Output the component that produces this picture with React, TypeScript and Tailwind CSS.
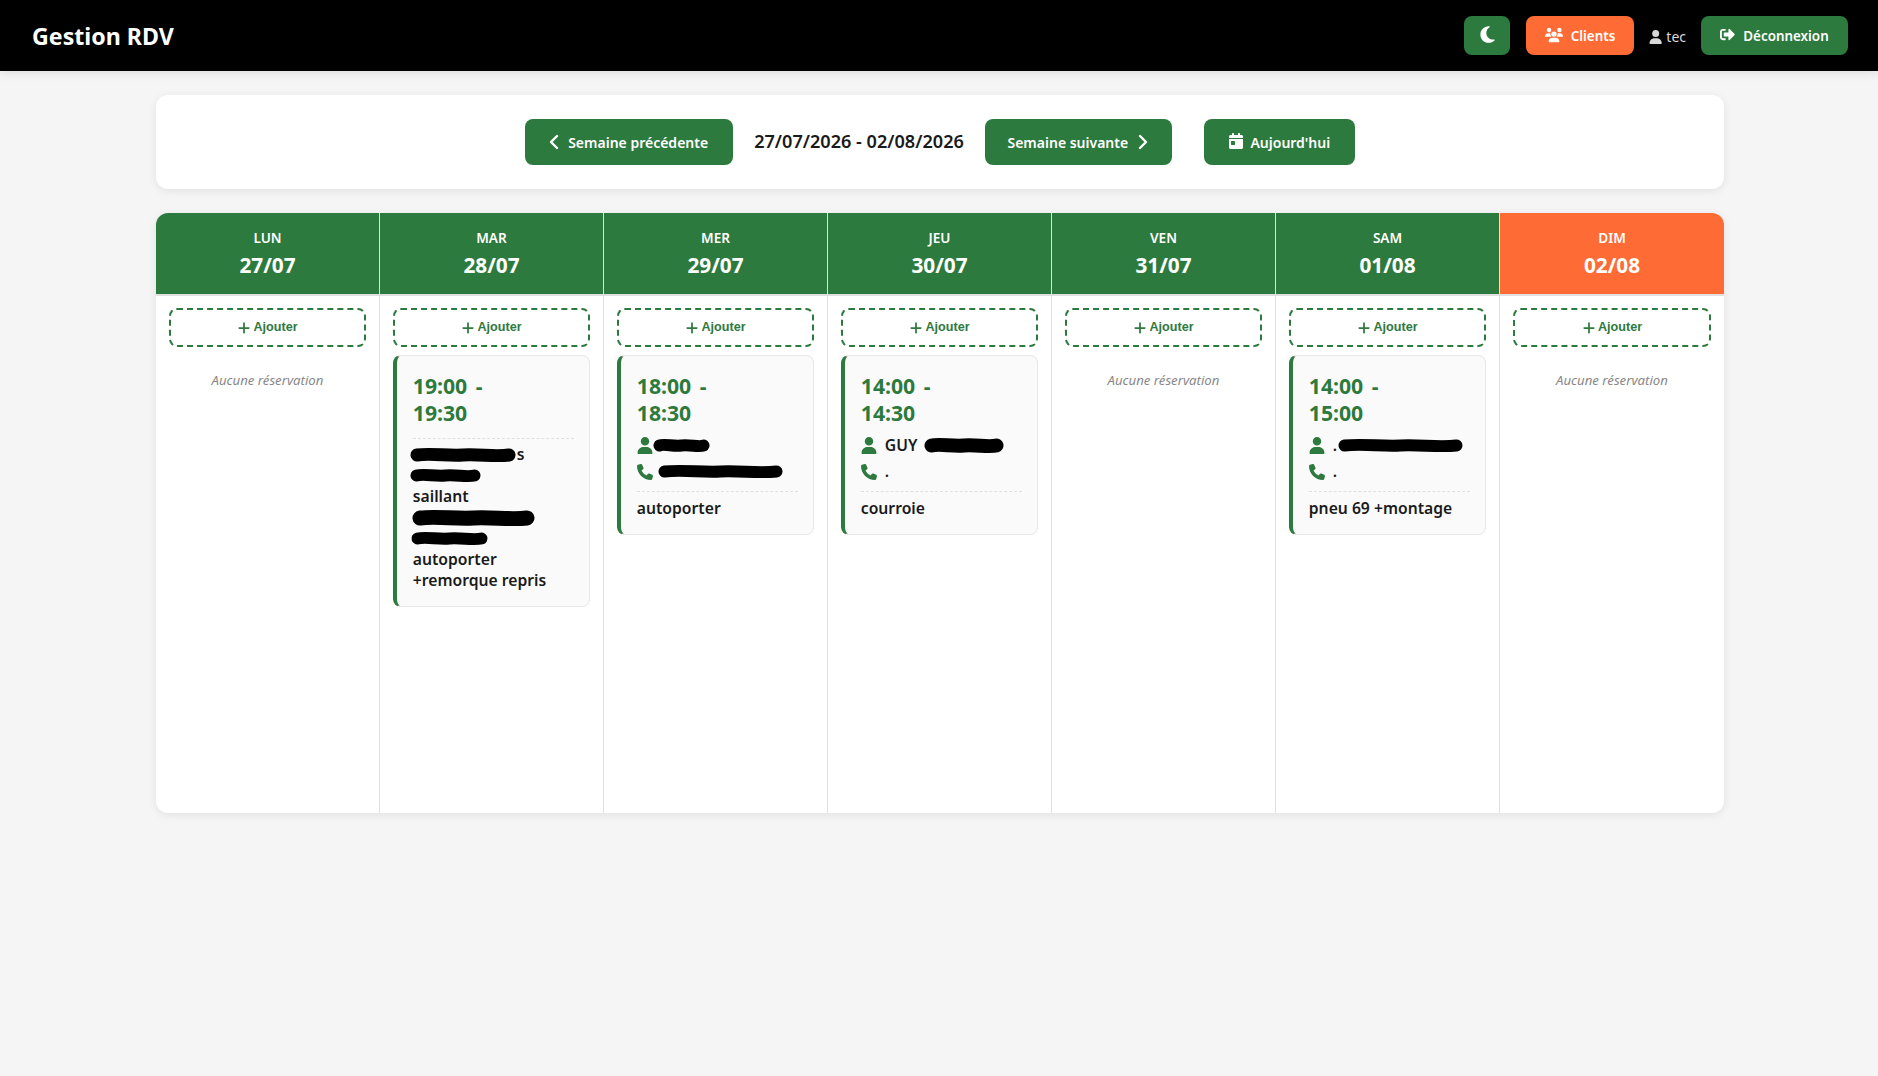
import { FaSignOutAlt } from 'react-icons/fa';
import {
  FaCalendarDay,
  FaMoon,
  FaPhone,
  FaPlus,
  FaUser,
  FaUsers,
} from 'react-icons/fa6';
import { ChevronLeft, ChevronRight } from 'lucide-react';

const font = { fontFamily: '"Noto Sans", "Open Sans", sans-serif' };

// black marker scribble hiding personal data
function Scribble({ w, h = 15, className = '' }: { w: number; h?: number; className?: string }) {
  const m = h / 2;
  return (
    <svg width={w} height={h} className={`shrink-0 ${className}`}>
      <path
        d={`M${m} ${m} C${w * 0.2} ${m - 2} ${w * 0.35} ${m + 1} ${w * 0.5} ${m} S${w * 0.8} ${m + 2} ${w - m} ${m}`}
        fill="none"
        stroke="#000"
        strokeWidth={h - 3}
        strokeLinecap="round"
      />
    </svg>
  );
}

function NavButton({ children, className = '' }: { children: React.ReactNode; className?: string }) {
  return (
    <button className={`flex h-[39px] items-center justify-center gap-2 rounded-lg pt-[2px] text-[13.4px] font-semibold text-white ${className}`}>
      {children}
    </button>
  );
}

function WeekButton({ children, className = '' }: { children: React.ReactNode; className?: string }) {
  return (
    <button className={`flex h-[46px] items-center justify-center rounded-lg bg-[#2d7a3e] text-[14px] font-semibold text-white ${className}`}>
      {children}
    </button>
  );
}

function Time({ from, to }: { from: string; to: string }) {
  return (
    <div className="text-[21.2px] leading-[27px] font-bold text-[#2d7a3e] [word-spacing:3px]">
      {from} -<br />
      {to}
    </div>
  );
}

function Row({ icon, children }: { icon: React.ReactNode; children: React.ReactNode }) {
  return (
    <div className="flex h-[26px] items-center gap-2 text-[15.7px] font-semibold text-[#1a1a1a]">
      <span className="flex w-4 shrink-0 justify-center text-[#2d7a3e]">{icon}</span>
      {children}
    </div>
  );
}

function Note({ children }: { children: React.ReactNode }) {
  return (
    <div className="mt-[6px] border-t border-dashed border-[#e0e0e0] pt-[6px] text-[15.7px] leading-[21px] font-semibold text-[#1a1a1a]">
      {children}
    </div>
  );
}

function Booking({ children }: { children: React.ReactNode }) {
  return (
    <div className="mt-2 rounded-lg border border-l-4 border-[#e8e8e8] border-l-[#2d7a3e] bg-[#fafafa] pt-[15.5px] pr-[15px] pb-[15px] pl-4">
      {children}
    </div>
  );
}

const person = <FaUser className="text-[17px]" />;
const phone = <FaPhone className="text-[16px]" />;

function Empty() {
  return <p className="mt-[24.4px] text-center text-[13.2px] leading-[19px] text-[#888] italic">Aucune réservation</p>;
}

const days = [
  {
    label: 'Lun',
    date: '27/07',
    content: <Empty />,
  },
  {
    label: 'Mar',
    date: '28/07',
    content: (
      <Booking>
        <Time from="19:00" to="19:30" />
        <div className="mt-[12px] border-t border-dashed border-[#e0e0e0] pt-[5.5px] text-[15.7px] leading-[21px] font-semibold text-[#1a1a1a]">
          <div className="-ml-1 flex h-[21px] items-center">
            <Scribble w={108} h={16} />
            <span>s</span>
          </div>
          <div className="-ml-1 flex h-[21px] items-center">
            <Scribble w={73} />
          </div>
          <div>saillant</div>
          <div className="-ml-0.5 flex h-[21px] items-center">
            <Scribble w={125} h={18} />
          </div>
          <div className="-ml-[3px] flex h-[21px] items-center">
            <Scribble w={79} />
          </div>
          <div>autoporter</div>
          <div>+remorque repris</div>
        </div>
      </Booking>
    ),
  },
  {
    label: 'Mer',
    date: '29/07',
    content: (
      <Booking>
        <Time from="18:00" to="18:30" />
        <div className="mt-[7px]">
          <Row icon={person}>
            <Scribble w={59} className="-ml-[9px]" />
          </Row>
          <Row icon={phone}>
            <Scribble w={127} className="-ml-1" />
          </Row>
        </div>
        <Note>autoporter</Note>
      </Booking>
    ),
  },
  {
    label: 'Jeu',
    date: '30/07',
    content: (
      <Booking>
        <Time from="14:00" to="14:30" />
        <div className="mt-[7px]">
          <Row icon={person}>
            <span>GUY</span>
            <Scribble w={82} h={17} className="-ml-[2px]" />
          </Row>
          <Row icon={phone}>
            <span>.</span>
          </Row>
        </div>
        <Note>courroie</Note>
      </Booking>
    ),
  },
  {
    label: 'Ven',
    date: '31/07',
    content: <Empty />,
  },
  {
    label: 'Sam',
    date: '01/08',
    content: (
      <Booking>
        <Time from="14:00" to="15:00" />
        <div className="mt-[7px]">
          <Row icon={person}>
            <span>.</span>
            <Scribble w={127} className="-ml-2" />
          </Row>
          <Row icon={phone}>
            <span>.</span>
          </Row>
        </div>
        <Note>pneu 69 +montage</Note>
      </Booking>
    ),
  },
  {
    label: 'Dim',
    date: '02/08',
    content: <Empty />,
    sunday: true,
  },
];

export default function App() {
  return (
    <div className="min-h-screen bg-[#f5f5f5] pb-[263px]" style={font}>
      <nav className="flex h-[71px] items-center justify-between bg-black pr-[30px] pl-8 shadow-[0_2px_10px_rgba(0,0,0,0.1)]">
        <h1 className="pt-px text-[23.2px] font-bold text-white">Gestion RDV</h1>
        <div className="flex items-center">
          <NavButton className="h-[37px] w-[46px] bg-[#2d7a3e] text-[19px]">
            <FaMoon className="-mt-1" />
          </NavButton>
          <NavButton className="ml-4 w-[108px] bg-[#ff6b35]">
            <FaUsers className="-mt-1 text-[18px]" />
            Clients
          </NavButton>
          <div className="ml-[15px] flex w-[37px] items-center gap-1 pt-[2px] text-[14px] text-[#d8d8d8]">
            <FaUser className="text-[14px]" />
            tec
          </div>
          <NavButton className="ml-[15px] w-[147px] bg-[#2d7a3e]">
            <FaSignOutAlt className="-mt-1 text-[15px]" />
            Déconnexion
          </NavButton>
        </div>
      </nav>

      <main className="mt-6 ml-[156px] w-[1568px]">
        <div className="flex h-[94px] items-center justify-center rounded-xl bg-white shadow-[0_2px_10px_rgba(0,0,0,0.08)]">
          <WeekButton className="w-[208px] gap-2 pr-[4px]">
            <ChevronLeft size={24} strokeWidth={2.4} className="-ml-1 -mr-1.5" />
            Semaine précédente
          </WeekButton>
          <span className="mx-[21px] text-[18.1px] font-semibold text-[#1a1a1a]">27/07/2026 - 02/08/2026</span>
          <WeekButton className="w-[187px] gap-[9px] pl-[2px]">
            Semaine suivante
            <ChevronRight size={24} strokeWidth={2.4} className="-mr-1 -ml-1.5" />
          </WeekButton>
          <WeekButton className="ml-8 w-[151px] gap-1.5">
            <FaCalendarDay className="-mt-0.5 text-[16px]" />
            Aujourd'hui
          </WeekButton>
        </div>

        <div className="mt-6 grid h-[600px] grid-cols-7 overflow-hidden rounded-xl bg-white shadow-[0_2px_10px_rgba(0,0,0,0.08)]">
          {days.map((day) => (
            <div key={day.date} className={`flex flex-col ${day.sunday ? '' : 'border-r border-[#e0e0e0]'}`}>
              <div className={`flex h-[83px] flex-col items-center border-b-2 border-[#e0e0e0] pt-[15px] text-white ${day.sunday ? 'bg-[#ff6b35]' : 'bg-[#2d7a3e]'}`}>
                <span className="text-[13.6px] leading-[19px] font-semibold uppercase">{day.label}</span>
                <span className="mt-[4px] text-[20.8px] leading-[29px] font-bold">{day.date}</span>
              </div>
              <div className="px-[12.8px] pt-[12px]">
                <button className="flex h-[39px] w-full items-center justify-center gap-[2px] rounded-lg border-2 border-dashed border-[#2d7a3e] text-[12.6px] font-bold text-[#2d7a3e] [font-family:'Liberation_Sans',sans-serif]">
                  <FaPlus className="text-[14px]" />
                  Ajouter
                </button>
                {day.content}
              </div>
            </div>
          ))}
        </div>
      </main>
    </div>
  );
}
